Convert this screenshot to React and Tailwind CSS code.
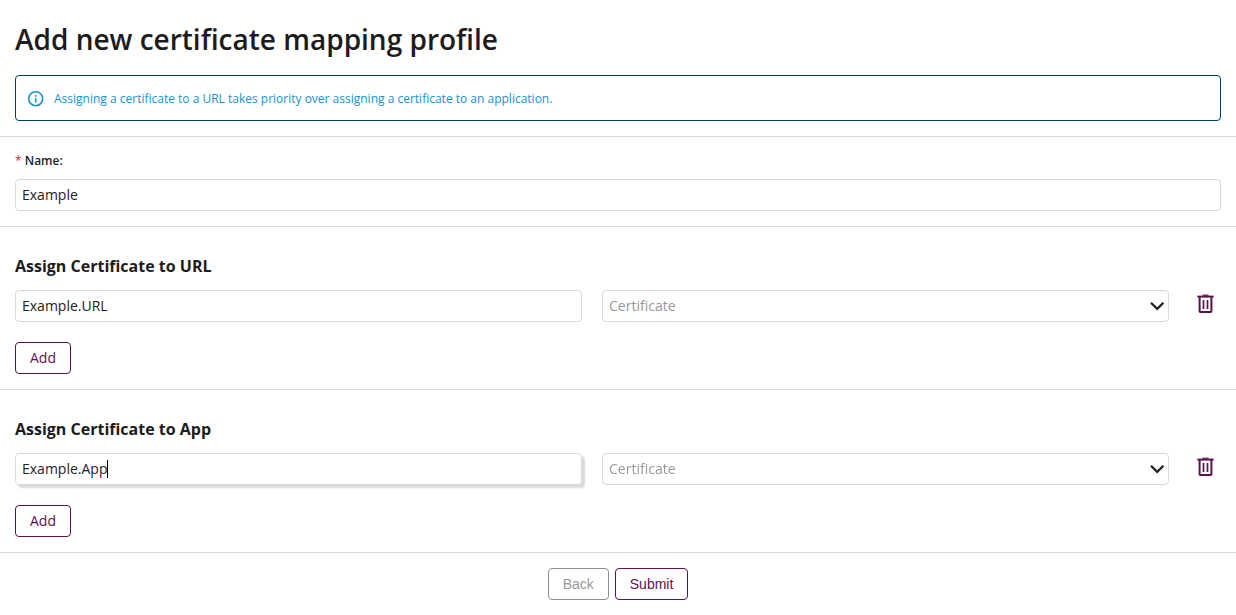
import React, { useState } from "react";

function InfoIcon() {
  return (
    <svg
      viewBox="0 0 18 18"
      className="size-[18px] shrink-0"
      fill="none"
      stroke="#1793d1"
      strokeWidth="1.6"
      aria-hidden="true"
    >
      <circle cx="8.7" cy="8.7" r="7" />
      <path d="M8.7 8v4.6M8.7 5v1.7" />
    </svg>
  );
}

function TrashIcon() {
  return (
    <svg viewBox="0 0 18 20" className="h-5 w-[18px]" fill="none" stroke="#5b1349" aria-hidden="true">
      <path d="M6.5 1.2h6" strokeWidth="1.2" />
      <path d="M1.4 2.6h16.2" strokeWidth="2" />
      <path d="M3.6 3v14.2a.7.7 0 0 0 .7.7h10.4a.7.7 0 0 0 .7-.7V3" strokeWidth="2" />
      <path d="M7.5 6v9M11.5 6v9" strokeWidth="1.7" />
    </svg>
  );
}

function Button({ muted, className = "", ...props }) {
  return (
    <button
      type="button"
      className={
        (muted ? "border-[#8c8c8c] text-[#999999] " : "border-[#5b1349] text-[#5b1349] ") +
        "h-8 rounded border bg-white px-3.5 text-sm " +
        className
      }
      {...props}
    />
  );
}

function TextInput(props) {
  return (
    <input
      type="text"
      className="block h-8 w-full min-w-0 rounded border border-[#d9d9d9] bg-white px-1.5 pb-0.5 text-sm text-[#222222] outline-none focus:shadow-[3px_3px_2px_rgba(0,0,0,0.15)]"
      {...props}
    />
  );
}

function AssignSection({ title, id, defaultValue, autoFocus }) {
  const [value, setValue] = useState(defaultValue);
  return (
    <section className="border-b border-[#d9d9d9] px-[15px] pt-[27px] pb-[15px]">
      <h2 className="text-base leading-6 font-bold">{title}</h2>
      <div className="mt-3 grid grid-cols-[1fr_1fr_32px] gap-5">
        <div className="relative">
          <TextInput
            id={id}
            aria-label={title}
            value={value}
            autoFocus={autoFocus}
            onChange={(e) => setValue(e.target.value)}
          />
          {autoFocus && (
            <div className="pointer-events-none absolute inset-y-[7px] left-[7px] flex text-sm">
              <span className="invisible">{value}</span>
              <span className="w-px bg-black" />
            </div>
          )}
        </div>
        <div className="relative">
          <select
            aria-label="Certificate"
            defaultValue=""
            className="block h-8 w-full appearance-none rounded border border-[#d9d9d9] bg-white px-1.5 text-sm text-[#999999] outline-none"
          >
            <option value="">Certificate</option>
          </select>
          <svg
            viewBox="0 0 16 16"
            className="pointer-events-none absolute top-2 right-1 size-4"
            fill="none"
            stroke="#222222"
            strokeWidth="2.3"
            aria-hidden="true"
          >
            <path d="M2 4.7 8.2 10.9l6.2-6.2" />
          </svg>
        </div>
        <button type="button" aria-label="Delete" className="flex h-7 items-center justify-center">
          <TrashIcon />
        </button>
      </div>
      <Button className="mt-5 block">Add</Button>
    </section>
  );
}

export default function App() {
  const [name, setName] = useState("Example");

  return (
    <form
      className="bg-white font-['Open_Sans',sans-serif] text-[#1c1c1c]"
      onSubmit={(e) => e.preventDefault()}
    >
      <header className="border-b border-[#d9d9d9] px-[15px] pt-[19px] pb-[15px]">
        <h1 className="text-[28px] leading-10 font-semibold">Add new certificate mapping profile</h1>
        <div className="mt-4 flex h-[46px] items-center gap-[9px] rounded border border-[#003f66] px-[11px] pt-px text-xs text-[#1793d1]">
          <InfoIcon />
          <p>Assigning a certificate to a URL takes priority over assigning a certificate to an application.</p>
        </div>
      </header>

      <section className="border-b border-[#d9d9d9] px-[15px] pt-3.5 pb-[15px]">
        <label htmlFor="name" className="mb-2 block text-xs leading-5 font-semibold">
          <span className="font-normal text-[#e02d2d]">*</span> Name:
        </label>
        <TextInput id="name" value={name} onChange={(e) => setName(e.target.value)} />
      </section>

      <AssignSection title="Assign Certificate to URL" id="url" defaultValue="Example.URL" />
      <AssignSection title="Assign Certificate to App" id="app" defaultValue="Example.App" autoFocus />

      <footer className="flex justify-center gap-1.5 py-[15px] font-['Liberation_Sans',sans-serif]">
        <Button muted>Back</Button>
        <Button type="submit">Submit</Button>
      </footer>
    </form>
  );
}
